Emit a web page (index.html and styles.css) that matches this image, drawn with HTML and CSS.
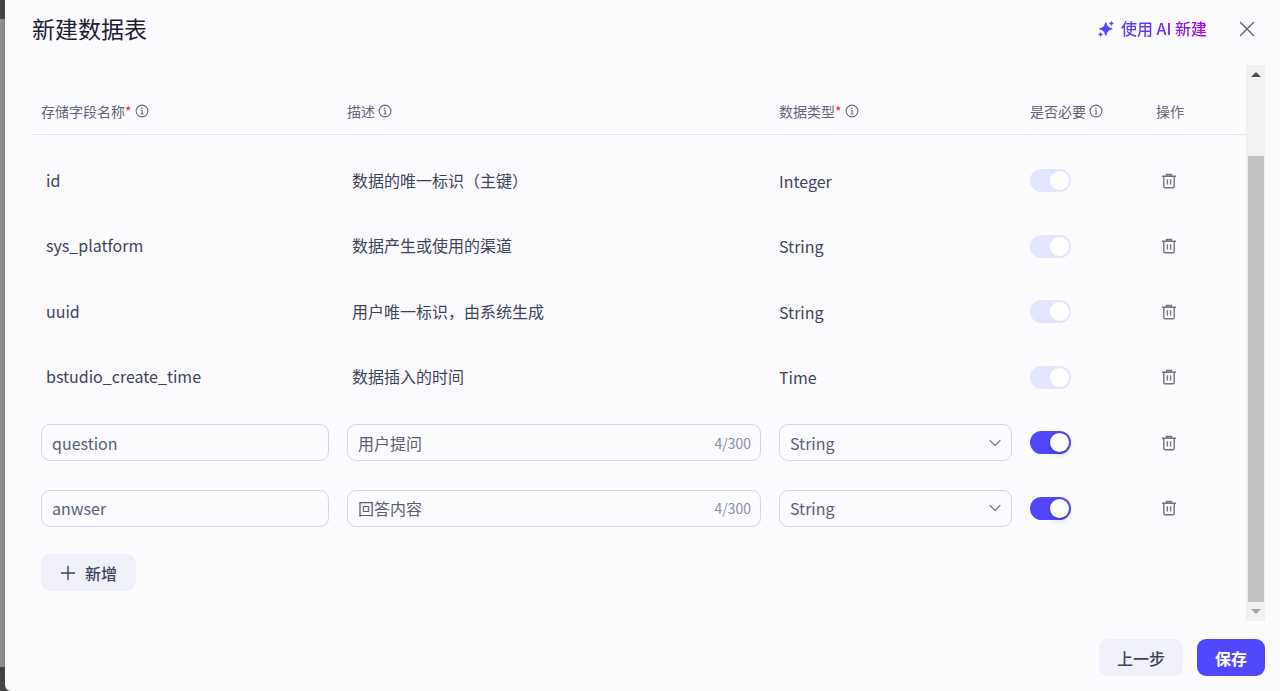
FILE: index.html
```html
<!DOCTYPE html>
<html lang="zh-CN">
<head>
    <meta charset="UTF-8">
    <meta name="viewport" content="width=device-width, initial-scale=1.0">
    <title>新建数据表</title>
    <link rel="stylesheet" href="styles.css">
</head>
<body>
    <!-- 公用图标 -->
    <svg class="sprite" aria-hidden="true">
        <symbol id="icon-info" viewBox="0 0 14 14">
            <circle cx="7" cy="7" r="5.9" fill="none" stroke="currentColor" stroke-width="1.1"/>
            <circle cx="6.9" cy="4.2" r="0.8" fill="currentColor"/>
            <path d="M5.7 6.2h1.5v3.6M5.5 9.9h3" fill="none" stroke="currentColor" stroke-width="1"/>
        </symbol>
        <symbol id="icon-trash" viewBox="0 0 16 16">
            <path d="M1 3.2h14M5.5 2.9V1.5h5v1.4M2.8 3.2v10.3q0 1.2 1.2 1.2h8q1.2 0 1.2-1.2V3.2M6.4 6.2v5.4M9.6 6.2v5.4" fill="none" stroke="currentColor" stroke-width="1.4"/>
        </symbol>
        <symbol id="icon-chevron" viewBox="0 0 12 12">
            <path d="M1 3.5l5 5 5-5" fill="none" stroke="currentColor" stroke-width="1.3" stroke-linecap="round" stroke-linejoin="round"/>
        </symbol>
    </svg>

    <div class="page-edge"></div>
    <main class="drawer">
        <header class="drawer-header">
            <h1>新建数据表</h1>
            <button class="btn-ai" type="button">
                <svg width="16" height="16" viewBox="0 0 16 16" fill="#5147ff">
                    <path d="M7.8 1.2Q8.300 1.200 8.500 1.900Q9.200 4.600 10.200 5.500Q11.200 6.500 13.800 7.200Q14.500 7.400 14.500 7.900Q14.500 8.400 13.800 8.600Q11.200 9.300 10.200 10.300Q9.200 11.200 8.500 13.900Q8.300 14.600 7.800 14.600Q7.300 14.600 7.100 13.900Q6.400 11.200 5.400 10.300Q4.400 9.300 1.800 8.600Q1.100 8.400 1.100 7.900Q1.100 7.400 1.800 7.200Q4.400 6.500 5.400 5.500Q6.400 4.600 7.100 1.900Q7.300 1.200 7.800 1.200z"/>
                    <path d="M13.400.2q.4 1.700 2.200 2.200-1.800.5-2.200 2.200-.4-1.700-2.200-2.200 1.800-.5 2.200-2.200zM2.600 11.200q.4 1.700 2.200 2.200-1.800.5-2.200 2.200-.4-1.700-2.200-2.200 1.800-.5 2.200-2.200z" stroke="#5147ff" stroke-width=".4"/>
                </svg>
                <span>使用 AI 新建</span>
            </button>
            <button class="btn-close" type="button" aria-label="关闭">
                <svg width="16" height="16" viewBox="0 0 16 16">
                    <path d="M1.500 1.500l13 13M14.500 1.500l-13 13" fill="none" stroke="currentColor" stroke-width="1.500" stroke-linecap="round"/>
                </svg>
            </button>
        </header>

        <div class="drawer-body">
            <div class="content">
                <table>
                    <colgroup>
                        <col class="col-name">
                        <col>
                        <col class="col-type">
                        <col class="col-required">
                        <col class="col-action">
                    </colgroup>
                    <thead>
                        <tr>
                            <th><div class="th-label"><span>存储字段名称<em>*</em></span><svg class="info"><use href="#icon-info"/></svg></div></th>
                            <th><div class="th-label"><span>描述</span><svg class="info"><use href="#icon-info"/></svg></div></th>
                            <th><div class="th-label"><span>数据类型<em>*</em></span><svg class="info"><use href="#icon-info"/></svg></div></th>
                            <th><div class="th-label"><span>是否必要</span><svg class="info"><use href="#icon-info"/></svg></div></th>
                            <th><div class="th-label"><span>操作</span></div></th>
                        </tr>
                    </thead>
                    <tbody>
                        <tr>
                            <td class="fixed">id</td>
                            <td class="fixed">数据的唯一标识（主键）</td>
                            <td>Integer</td>
                            <td><input class="switch" type="checkbox" aria-label="id 是否必要" checked disabled></td>
                            <td><button class="btn-trash" type="button" aria-label="删除 id"><svg><use href="#icon-trash"/></svg></button></td>
                        </tr>
                        <tr>
                            <td class="fixed">sys_platform</td>
                            <td class="fixed">数据产生或使用的渠道</td>
                            <td>String</td>
                            <td><input class="switch" type="checkbox" aria-label="sys_platform 是否必要" checked disabled></td>
                            <td><button class="btn-trash" type="button" aria-label="删除 sys_platform"><svg><use href="#icon-trash"/></svg></button></td>
                        </tr>
                        <tr>
                            <td class="fixed">uuid</td>
                            <td class="fixed">用户唯一标识，由系统生成</td>
                            <td>String</td>
                            <td><input class="switch" type="checkbox" aria-label="uuid 是否必要" checked disabled></td>
                            <td><button class="btn-trash" type="button" aria-label="删除 uuid"><svg><use href="#icon-trash"/></svg></button></td>
                        </tr>
                        <tr>
                            <td class="fixed">bstudio_create_time</td>
                            <td class="fixed">数据插入的时间</td>
                            <td>Time</td>
                            <td><input class="switch" type="checkbox" aria-label="bstudio_create_time 是否必要" checked disabled></td>
                            <td><button class="btn-trash" type="button" aria-label="删除 bstudio_create_time"><svg><use href="#icon-trash"/></svg></button></td>
                        </tr>
                        <tr>
                            <td><div class="field"><input type="text" aria-label="存储字段名称" value="question"></div></td>
                            <td><div class="field"><input class="desc" type="text" aria-label="描述" maxlength="300" value="用户提问"><span class="counter">4/300</span></div></td>
                            <td>
                                <div class="field">
                                    <select aria-label="数据类型">
                                        <option selected>String</option>
                                        <option>Integer</option>
                                        <option>Time</option>
                                    </select>
                                    <svg class="chevron"><use href="#icon-chevron"/></svg>
                                </div>
                            </td>
                            <td><input class="switch" type="checkbox" aria-label="question 是否必要" checked></td>
                            <td><button class="btn-trash" type="button" aria-label="删除 question"><svg><use href="#icon-trash"/></svg></button></td>
                        </tr>
                        <tr>
                            <td><div class="field"><input type="text" aria-label="存储字段名称" value="anwser"></div></td>
                            <td><div class="field"><input class="desc" type="text" aria-label="描述" maxlength="300" value="回答内容"><span class="counter">4/300</span></div></td>
                            <td>
                                <div class="field">
                                    <select aria-label="数据类型">
                                        <option selected>String</option>
                                        <option>Integer</option>
                                        <option>Time</option>
                                    </select>
                                    <svg class="chevron"><use href="#icon-chevron"/></svg>
                                </div>
                            </td>
                            <td><input class="switch" type="checkbox" aria-label="anwser 是否必要" checked></td>
                            <td><button class="btn-trash" type="button" aria-label="删除 anwser"><svg><use href="#icon-trash"/></svg></button></td>
                        </tr>
                    </tbody>
                </table>
                <button class="btn btn-add" type="button">
                    <svg width="16" height="16" viewBox="0 0 16 16"><path d="M8 1.500v13M1.500 8h13" fill="none" stroke="currentColor" stroke-width="1.400" stroke-linecap="round"/></svg>
                    新增
                </button>
            </div>
            <div class="scrollbar" aria-hidden="true">
                <div class="arrow arrow-up"></div>
                <div class="thumb"></div>
                <div class="arrow arrow-down"></div>
            </div>
        </div>

        <footer class="drawer-footer">
            <button class="btn" type="button">上一步</button>
            <button class="btn btn-primary" type="button">保存</button>
        </footer>
    </main>
</body>
</html>
```

FILE: styles.css
```css
* {
    box-sizing: border-box;
}
body {
    margin: 0;
    height: 100vh;
    display: flex;
    overflow: hidden;
    background-color: #434343;
    font-family: "Noto Sans CJK SC", sans-serif;
    font-size: 16px;
    line-height: 24px;
    color: #3f4359;
}
button, input, select {
    font: inherit;
    color: inherit;
    margin: 0;
}
button {
    border: none;
    cursor: pointer;
}
svg {
    display: block;
}
.sprite {
    position: absolute;
    width: 0;
    height: 0;
}
.page-edge {
    width: 5px;
    margin: 19px 0 24px;
    background-color: #8d8d8d;
    border-right: 1px solid #7c7c7c;
}
.drawer {
    flex: 1;
    min-width: 0;
    display: flex;
    flex-direction: column;
    background-color: #fcfcff;
    border-radius: 0 0 0 6px;
}
.drawer-header {
    display: flex;
    align-items: center;
    height: 58px;
    margin-bottom: 7px;
    padding: 0 25px 0 27px;
}
.drawer-header h1 {
    flex: 1;
    margin: 0;
    padding-bottom: 2px;
    font-size: 23px;
    line-height: 32px;
    font-weight: 400;
    color: #1d2033;
}
.btn-ai {
    display: flex;
    align-items: center;
    gap: 7px;
    padding: 0;
    background: none;
    font-weight: 500;
}
.btn-ai span {
    padding-bottom: 2px;
    background: linear-gradient(90deg, #5147ff, #a20ae0);
    -webkit-background-clip: text;
    background-clip: text;
    color: transparent;
}
.btn-close {
    margin-left: 32px;
    padding: 0;
    background: none;
    color: #626880;
}
.drawer-body {
    flex: 1;
    min-height: 0;
    display: flex;
    padding: 0 15px 0 27px;
}
.content {
    flex: 1;
    min-width: 0;
    overflow: hidden;
}
table {
    width: 100%;
    table-layout: fixed;
    border-collapse: separate;
    border-spacing: 0;
}
.col-name {
    width: 306px;
}
.col-type {
    width: 251px;
}
.col-required {
    width: 126px;
}
.col-action {
    width: 99px;
}
th {
    padding: 36px 9px 13px;
    border-bottom: 1px solid #e4e5ec;
    font-size: 14px;
    line-height: 20px;
    font-weight: 400;
    text-align: left;
    color: #62667a;
}
th em {
    font-style: normal;
    color: #f0223c;
}
.th-label {
    display: flex;
    align-items: center;
    gap: 3px;
}
.info {
    width: 14px;
    height: 14px;
}
td {
    height: 65px;
    padding: 0 9px;
    vertical-align: middle;
}
tbody tr:nth-child(even) td {
    height: 66px;
}
tbody tr:first-child td {
    height: 78px;
    padding-top: 13px;
}
td.fixed {
    padding-left: 14px;
    padding-bottom: 2px;
}
.field {
    position: relative;
    display: flex;
    align-items: center;
    color: #5b5f73;
}
.field input, .field select {
    width: 100%;
    height: 37px;
    padding: 0 10px;
    border: 1px solid #d5d7e8;
    border-radius: 9px;
    background-color: transparent;
    appearance: none;
}
.field input.desc {
    padding-right: 56px;
}
.counter {
    position: absolute;
    right: 10px;
    font-size: 14px;
    color: #8b8fa3;
}
.chevron {
    position: absolute;
    right: 11px;
    width: 12px;
    height: 12px;
    color: #7b7f8e;
    pointer-events: none;
}
.switch {
    display: flex;
    align-items: center;
    justify-content: flex-end;
    width: 41px;
    height: 23px;
    padding: 2px;
    border-radius: 12px;
    background-color: #5147ff;
    appearance: none;
}
.switch::before {
    content: "";
    width: 19px;
    height: 19px;
    border-radius: 50%;
    background-color: #fff;
    box-shadow: 0 3px 6px rgba(0, 0, 0, 0.15);
}
.switch:not(:checked) {
    justify-content: flex-start;
    background-color: #d5d7e8;
}
.switch:disabled {
    background-color: #e4e6ff;
}
.switch:disabled::before {
    box-shadow: none;
}
.btn-trash {
    display: block;
    margin-left: 5px;
    padding: 0;
    background: none;
    color: #73757f;
}
.btn-trash svg {
    width: 16px;
    height: 16px;
}
.btn {
    display: flex;
    align-items: center;
    height: 37px;
    padding: 0 18px;
    border-radius: 9px;
    background-color: #f0f0f9;
    font-weight: 500;
}
.btn-add {
    gap: 9px;
    margin: 13px 9px 0;
    padding: 0 19px;
}
.btn-primary {
    background-color: #5147ff;
    font-weight: 700;
    color: #fff;
}
.scrollbar {
    display: flex;
    flex-direction: column;
    align-items: center;
    width: 19px;
    background-color: #f1f1f1;
}
.arrow {
    display: flex;
    align-items: center;
    justify-content: center;
    height: 19px;
}
.arrow::before {
    content: "";
    border: 5px solid transparent;
}
.arrow-up {
    margin-bottom: 72px;
}
.arrow-up::before {
    border-top: none;
    border-bottom-color: #505050;
}
.arrow-down::before {
    border-bottom: none;
    border-top-color: #a3a3a3;
}
.thumb {
    flex: 1;
    width: 16px;
    background-color: #c1c1c1;
}
.drawer-footer {
    display: flex;
    justify-content: flex-end;
    gap: 14px;
    padding: 18px 15px 15px;
}
```
